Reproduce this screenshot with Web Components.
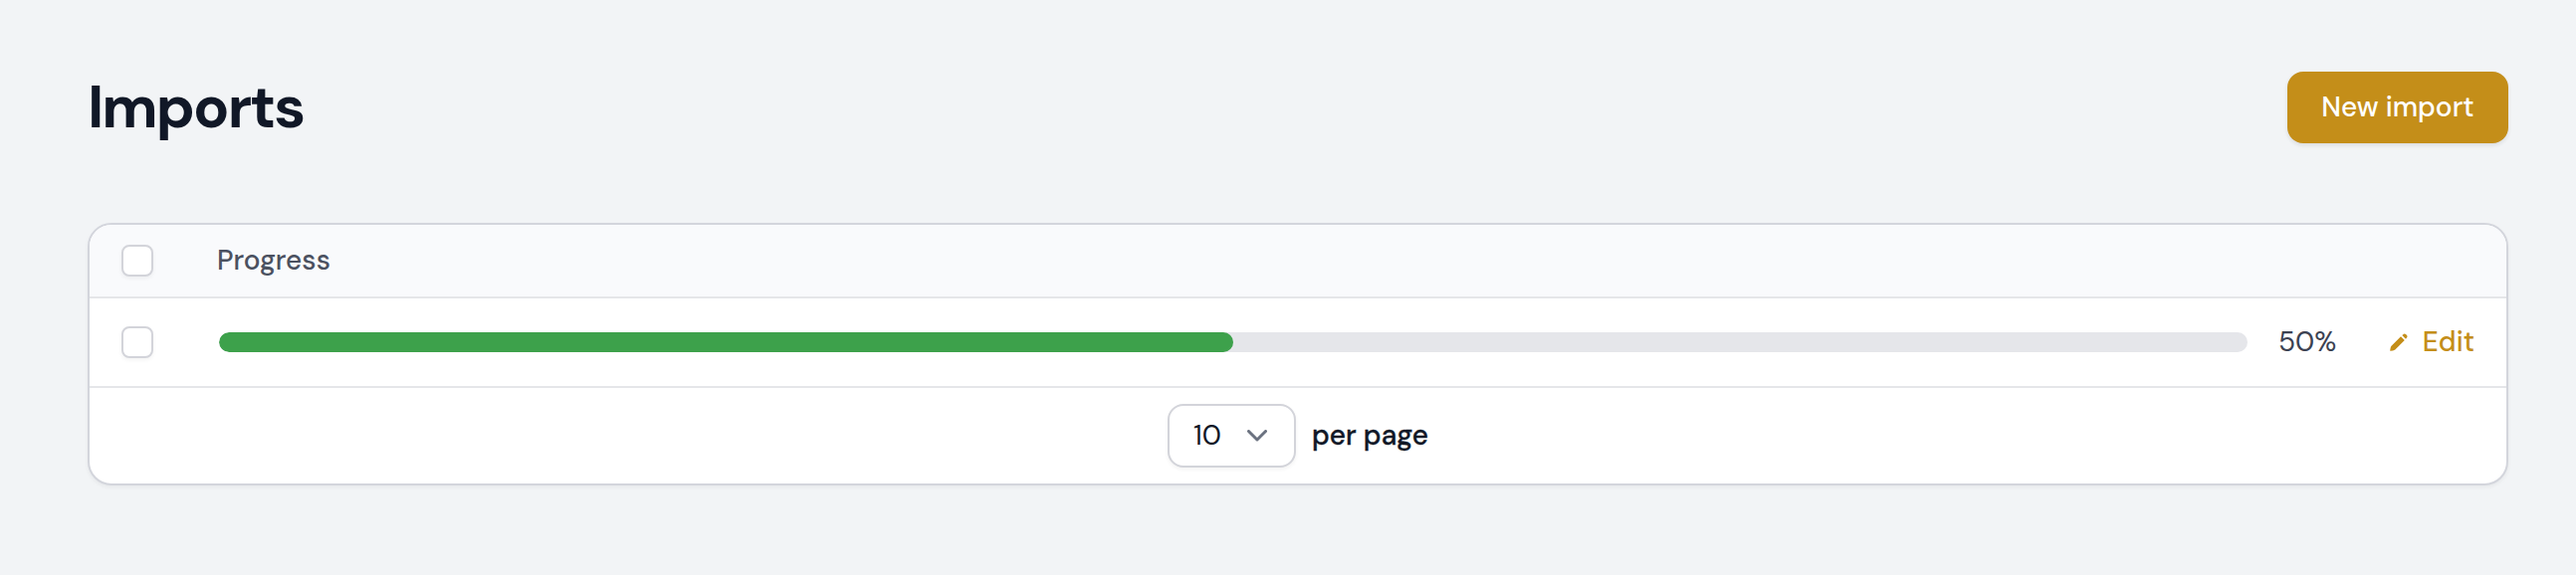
<!DOCTYPE html>
<html lang="en">
<head>
<meta charset="utf-8">
<title>Imports</title>
<style>
html,body{margin:0;height:100%;background:#f2f4f6}
body{font-family:"DM Sans",Lato,"Liberation Sans",sans-serif;font-size:28px;line-height:40px;color:#111827;font-weight:500;overflow:hidden}
</style>
</head>
<body>
<imports-page></imports-page>
<script>
const define=(name,html)=>{
  const t=document.createElement('template');t.innerHTML=html;
  customElements.define(name,class extends HTMLElement{
    constructor(){super();this.attachShadow({mode:'open'}).append(t.content.cloneNode(true));}
  });
};
define('page-button',`<style>
:host{display:flex;align-items:center;justify-content:center;box-sizing:border-box;width:222px;height:72px;border-radius:16px;background:#c48e19;color:#fff;box-shadow:0 2px 4px rgba(0,0,0,.1);white-space:nowrap}
</style><slot></slot>`);
define('check-box',`<style>
:host{display:block;box-sizing:border-box;width:32px;height:32px;border:2px solid #d3d4da;border-radius:8px;background:#fff;box-shadow:0 2px 4px rgba(0,0,0,.05)}
</style>`);
define('progress-bar',`<style>
:host{display:block;height:20px;border-radius:10px;background:#e5e6ea;overflow:hidden}
div{width:50%;height:100%;border-radius:10px;background:#3da14b}
</style><div></div>`);
define('edit-link',`<style>
:host{display:flex;align-items:center;color:#c48e19;white-space:nowrap}
svg{width:18px;height:18px;margin-right:15px;display:block}
</style><svg viewBox="0 0 18 18" fill="currentColor"><path d="M11 3.2 14.8 7 5.3 16.5Q4.4 17.2 3 17.4L.7 17.8Q.2 17.8.2 17.3L.6 15Q.8 13.5 1.5 12.7Z"/><path d="M12.3 2 14 .7Q15 0 16 1L17 2Q18 3 17.3 4L16 5.7Z"/></svg><span><slot></slot></span>`);
define('page-size',`<style>
:host{display:flex;align-items:center;justify-content:space-between;box-sizing:border-box;width:129px;height:64px;padding:0 27px 0 24px;border:2px solid #d3d4da;border-radius:16px;background:#fff;box-shadow:0 2px 4px rgba(0,0,0,.05);font-weight:400}
svg{width:20px;height:12px;display:block}
</style><span><slot></slot></span><svg viewBox="0 0 20 12" fill="none" stroke="#6b7280" stroke-width="3" stroke-linecap="round" stroke-linejoin="round"><path d="M1.5 1.5 10 10 18.5 1.5"/></svg>`);
define('imports-table',`<style>
:host{display:block;box-sizing:border-box;height:264px;border:2px solid #d3d5dc;border-radius:24px;background:#fff;overflow:hidden;box-shadow:0 2px 4px rgba(0,0,0,.05)}
.row{display:grid;grid-template-columns:32px 1fr;column-gap:64px;align-items:center;box-sizing:border-box;padding:0 32px;border-bottom:2px solid #e5e6e9}
.head{height:74px;background:#f9fafc;color:#4b5160}
.body{height:90px;column-gap:66px}
.cell{display:grid;grid-template-columns:2038px 1fr auto;align-items:center}
.pct{padding-left:31px;font-weight:400;color:#3b4252}
.foot{height:96px;display:flex;align-items:center;padding-left:1083px;gap:16px}
.foot span{-webkit-text-stroke:.3px}
</style>
<div class="row head"><check-box></check-box><span>Progress</span></div>
<div class="row body"><check-box></check-box><div class="cell"><progress-bar></progress-bar><span class="pct">50%</span><edit-link>Edit</edit-link></div></div>
<div class="foot"><page-size>10</page-size><span>per page</span></div>`);
define('imports-page',`<style>
:host{display:block;box-sizing:border-box;padding:72px 68px 0 88px}
header{display:flex;align-items:center;justify-content:space-between;height:72px;margin-bottom:80px}
h1{margin:0;font-size:60px;line-height:72px;font-weight:700;letter-spacing:-2px}
</style>
<header><h1>Imports</h1><page-button>New import</page-button></header>
<imports-table></imports-table>`);
</script>
</body>
</html>
